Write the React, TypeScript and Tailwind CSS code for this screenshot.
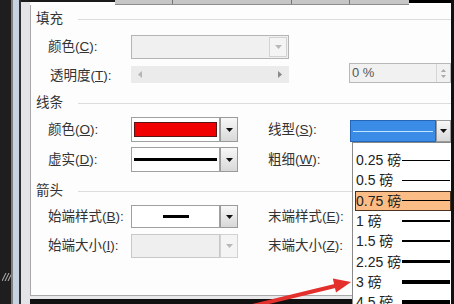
const ITEMS = [
  { label: '0.25 磅', h: 'h-px' },
  { label: '0.5 磅', h: 'h-px' },
  { label: '0.75 磅', h: 'h-px', active: true },
  { label: '1 磅', h: 'h-[2px]' },
  { label: '1.5 磅', h: 'h-[2px]' },
  { label: '2.25 磅', h: 'h-[3px]' },
  { label: '3 磅', h: 'h-[4px]' },
  { label: '4.5 磅', h: 'h-[5px]' },
]

function Caret({ color = '#111' }: { color?: string }) {
  return (
    <svg width="7" height="4" viewBox="0 0 7 4">
      <polygon points="0,0 7,0 3.5,4" fill={color} />
    </svg>
  )
}

function DropButton({ disabled, className = 'w-[18px]' }: { disabled?: boolean; className?: string }) {
  return (
    <div
      className={`${className} h-full shrink-0 flex items-center justify-center border ${
        disabled ? 'border-[#d2d2d2] bg-[#f4f4f4]' : 'border-[#9a9a9a] bg-gradient-to-b from-[#f8f8f8] to-[#d8d8d8]'
      }`}
    >
      <Caret color={disabled ? '#b8b8b8' : '#111'} />
    </div>
  )
}

function Label({ text, k, className = '' }: { text: string; k: string; className?: string }) {
  return (
    <div className={`shrink-0 text-[13.5px] leading-none text-[#333] whitespace-nowrap ${className}`}>
      {text}(<span className="underline">{k}</span>):
    </div>
  )
}

function Heading({ text, className = '' }: { text: string; className?: string }) {
  return (
    <div className={`flex items-center pl-[5px] ${className}`}>
      <span className="text-[13.5px] leading-none text-[#333]">{text}</span>
      <div className="flex-1 ml-[15px] h-px bg-[#dcdcdc]" />
    </div>
  )
}

export default function App() {
  return (
    <div className="relative w-[454px] h-[304px] overflow-hidden bg-[#111] flex font-['Liberation_Sans','Noto_Sans_CJK_SC',sans-serif]">
      {/* window chrome on the left */}
      <div className="w-[11px] bg-[#1e1e1e] pt-[272px] pl-[2px]">
        <svg width="11" height="10" viewBox="0 0 11 10">
          <line x1="0" y1="9" x2="4" y2="1" stroke="#bbb" strokeWidth="1" />
          <line x1="3" y1="9" x2="7" y2="1" stroke="#bbb" strokeWidth="1" />
          <line x1="6" y1="9" x2="10" y2="1" stroke="#bbb" strokeWidth="1" />
        </svg>
      </div>
      <div className="w-[2px] bg-[#808080]" />
      <div className="w-[6px] bg-[#c5d3e2]" />
      <div className="w-[2px] bg-[#2f2f2f]" />
      <div className="w-[9px] bg-[#e4e4e8] border-t-2 border-[#1a1a1a]" />

      <div className="w-[421px] flex flex-col">
        {/* bottoms of the buttons above */}
        <div className="h-[5px] flex shrink-0">
          <div className="w-[85px] bg-white border-t-2 border-[#1a1a1a]" />
          <div className="w-[294px] bg-[#c6c6c6] border-b border-[#8c8c8c] flex">
            <div className="w-[58px] border-r border-[#777]" />
            <div className="w-[119px] border-r border-[#777]" />
            <div className="w-[58px] border-r border-[#777]" />
          </div>
          <div className="flex-1 bg-white border-t-[3px] border-black" />
        </div>

        <div className="h-[291px] shrink-0 flex flex-col bg-[#fdfdfd] border-l border-b border-[#a8a8a8]">
          <Heading text="填充" className="h-[28px]" />

          <div className="flex items-center pl-[17px] h-[24px] mt-[2px]">
            <Label text="颜色" k="C" className="w-[83px]" />
            <div className="w-[158px] h-full border border-[#b4b4b4] bg-[#f0f0f0] flex justify-end p-px">
              <DropButton disabled />
            </div>
          </div>

          <div className="flex items-center pl-[17px] h-[20px] mt-[4px]">
            <Label text="透明度" k="T" className="w-[83px] pl-[2px] mt-[5px]" />
            <div className="w-[158px] h-[17px] self-end bg-[#ebebeb] flex items-center justify-between px-[7px]">
              <svg width="4" height="7" viewBox="0 0 4 7">
                <polygon points="4,0 4,7 0,3.5" fill="#b5b5b5" />
              </svg>
              <svg width="4" height="7" viewBox="0 0 4 7">
                <polygon points="0,0 0,7 4,3.5" fill="#8a8a8a" />
              </svg>
            </div>
            <div className="ml-[60px] flex-1 h-full border border-[#b8b8b8] bg-[#f1f1f1] flex items-center">
              <span className="flex-1 pl-[2px] text-[13px] text-[#555]">0 %</span>
              <div className="w-[14px] h-full flex flex-col items-center justify-center gap-[3px] border-l border-[#d6d6d6]">
                <svg width="5" height="3" viewBox="0 0 5 3">
                  <polygon points="0,3 5,3 2.5,0" fill="#aaa" />
                </svg>
                <svg width="5" height="3" viewBox="0 0 5 3">
                  <polygon points="0,0 5,0 2.5,3" fill="#aaa" />
                </svg>
              </div>
            </div>
          </div>

          <Heading text="线条" className="h-[26px] mt-[7px]" />

          <div className="flex items-center pl-[17px] h-[25px] mt-px">
            <Label text="颜色" k="O" className="w-[83px]" />
            <div className="w-[107px] h-full flex">
              <div className="w-[89px] h-full border border-[#a0a0a0] bg-white px-[2px] py-[4px]">
                <div className="h-full bg-[#f00000] border border-[#5a1414]" />
              </div>
              <DropButton />
            </div>
            <div className="w-[30px]" />
            <Label text="线型" k="S" className="w-[82px]" />
            <div className="flex-1 h-[22px] self-end flex">
              <div className="flex-1 h-full bg-[#3a8ce6] border border-[#2467b8] flex items-center px-[2px]">
                <div className="w-full h-px bg-[#bfe4ff]" />
              </div>
              <DropButton className="w-[15px]" />
            </div>
          </div>

          <div className="flex items-center pl-[17px] h-[25px] mt-[5px]">
            <Label text="虚实" k="D" className="w-[83px]" />
            <div className="w-[107px] h-full flex">
              <div className="w-[89px] h-full border border-[#a0a0a0] bg-white flex items-center px-[2px]">
                <div className="w-full h-[3px] bg-black" />
              </div>
              <DropButton />
            </div>
            <div className="w-[30px]" />
            <Label text="粗细" k="W" className="w-[82px]" />
          </div>

          <Heading text="箭头" className="h-[24px] mt-[7px]" />

          <div className="flex items-center pl-[17px] h-[23px] mt-[2px]">
            <Label text="始端样式" k="B" className="w-[83px]" />
            <div className="w-[107px] h-full flex">
              <div className="w-[89px] h-full border border-[#a0a0a0] bg-white flex items-center justify-center">
                <div className="w-[26px] h-[3px] bg-black" />
              </div>
              <DropButton />
            </div>
            <div className="w-[30px]" />
            <Label text="末端样式" k="E" className="w-[82px]" />
          </div>

          <div className="flex items-center pl-[17px] h-[24px] mt-[6px]">
            <Label text="始端大小" k="I" className="w-[83px]" />
            <div className="w-[107px] h-full flex">
              <div className="w-[89px] h-full border border-[#c8c8c8] bg-[#efefef]" />
              <DropButton disabled />
            </div>
            <div className="w-[30px]" />
            <Label text="末端大小" k="Z" className="w-[82px]" />
          </div>
        </div>

        <div className="h-[3px] bg-[#e8e8eb] shrink-0" />
        <div className="flex-1 bg-[#111]" />
      </div>

      <div className="w-[3px] bg-[#111]" />

      {/* open line style list */}
      <div className="absolute left-[352px] top-[142px] w-[99px] h-[170px] bg-white border-l border-t border-[#8a8a8a] pt-[7px]">
        {ITEMS.map((it) => (
          <div
            key={it.label}
            className={`h-[20.3px] ml-[2px] flex items-center border ${
              it.active ? 'bg-[#fbbd85] border-[#4a3320]' : 'border-transparent'
            }`}
          >
            <span className="min-w-[45px] whitespace-nowrap text-[14px] leading-none text-[#222]">{it.label}</span>
            <div className={`flex-1 ml-px bg-black ${it.h}`} />
          </div>
        ))}
      </div>

      {/* red pointer arrow */}
      <svg className="absolute inset-0 pointer-events-none" width="454" height="304" viewBox="0 0 454 304">
        <line x1="240" y1="309" x2="337" y2="285.5" stroke="#e3302d" strokeWidth="4" />
        <polygon points="351,282 332.8,278.5 336,292.5" fill="#e3302d" />
      </svg>
    </div>
  )
}
